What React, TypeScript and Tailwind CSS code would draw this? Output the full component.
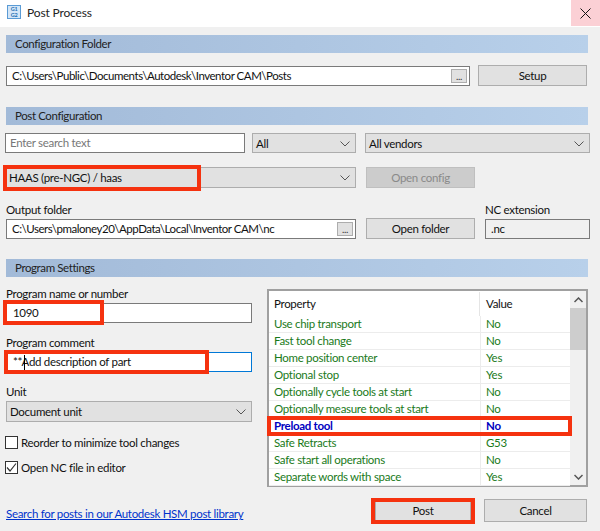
const font = { fontFamily: 'Lato, "Noto Sans", sans-serif' };

function Bar({ children }: { children: string }) {
  return (
    <div className="h-[18px] w-[582px] ml-[6px] pl-[9px] flex items-center text-[11.5px] tracking-[-0.4px] text-[#222] bg-gradient-to-r from-[#a2bad8] to-[#b8d0ea]">
      {children}
    </div>
  );
}

function Chevron() {
  return (
    <svg width="10" height="6" viewBox="0 0 10 6" className="shrink-0">
      <path d="M0.5 0.5 L5 5 L9.5 0.5" fill="none" stroke="#555" strokeWidth="1" />
    </svg>
  );
}

function Select({ label, className }: { label: string; className: string }) {
  return (
    <div className={`flex items-center justify-between border border-[#adadad] bg-[#e1e1e1] pl-[3px] pr-[5px] text-[#111] ${className}`}>
      <span>{label}</span>
      <Chevron />
    </div>
  );
}

function Btn({ label, className }: { label: string; className: string }) {
  return (
    <div className={`flex items-center justify-center border border-[#adadad] bg-[#e1e1e1] text-[#111] ${className}`}>
      {label}
    </div>
  );
}

function PathInput({ value, className }: { value: string; className: string }) {
  return (
    <div className={`flex items-center justify-between border border-[#7a7a7a] bg-white pl-[5px] pr-[2px] text-[#111] ${className}`}>
      <span className="tracking-[-0.47px]">{value}</span>
      <div className="w-[16px] h-[14px] border border-[#adadad] bg-[#e1e1e1] flex items-center justify-center text-[10px] leading-none text-[#333]">...</div>
    </div>
  );
}

const rows: [string, string][] = [
  ["Use chip transport", "No"],
  ["Fast tool change", "No"],
  ["Home position center", "Yes"],
  ["Optional stop", "Yes"],
  ["Optionally cycle tools at start", "No"],
  ["Optionally measure tools at start", "No"],
  ["Preload tool", "No"],
  ["Safe Retracts", "G53"],
  ["Safe start all operations", "No"],
  ["Separate words with space", "Yes"],
];

function Red({ className }: { className: string }) {
  return <div className={`absolute border-[4px] border-[#f5320f] pointer-events-none ${className}`} />;
}

export default function App() {
  return (
    <div style={font} className="relative w-[600px] h-[531px] bg-[#f0f0f0] overflow-hidden text-[11.5px] tracking-[-0.3px] text-[#111]">
      <div className="h-[27px] bg-white flex items-start">
        <svg width="14" height="14" viewBox="0 0 14 14" className="ml-[7px] mt-[5px]">
          <rect x="0.5" y="0.5" width="13" height="13" fill="#d4e6f7" stroke="#5a9bd5" />
          <text x="7" y="6.2" fontSize="5.5" fontWeight="700" textAnchor="middle" fill="#1f6fb5">G1</text>
          <text x="7" y="12" fontSize="5.5" fontWeight="700" textAnchor="middle" fill="#1f6fb5">G2</text>
        </svg>
        <span className="ml-[6px] mt-[4px] text-[12px] tracking-[-0.15px] text-[#222]">Post Process</span>
        <div className="ml-auto w-[29px] h-[26px] bg-[#fbd0d5] flex items-center justify-center">
          <svg width="11" height="11" viewBox="0 0 11 11"><path d="M0.5 0.5 L10.5 10.5 M10.5 0.5 L0.5 10.5" stroke="#111" strokeWidth="1" /></svg>
        </div>
      </div>

      <div className="h-[8px]" />
      <Bar>Configuration Folder</Bar>

      <div className="flex items-center mt-[12px] h-[21px] pl-[6px]">
        <PathInput value="C:\Users\Public\Documents\Autodesk\Inventor CAM\Posts" className="w-[464px] h-[20px]" />
        <Btn label="Setup" className="ml-[8px] w-[109px] h-[21px]" />
      </div>

      <div className="h-[21px]" />
      <Bar>Post Configuration</Bar>

      <div className="flex mt-[8px] h-[20px] pl-[5px]">
        <div className="w-[240px] h-[20px] border border-[#7a7a7a] bg-white pl-[4px] flex items-center text-[#777]">Enter search text</div>
        <Select label="All" className="ml-[7px] w-[104px] h-[20px] pt-[1px]" />
        <Select label="All vendors" className="ml-[9px] w-[225px] h-[20px] pt-[1px]" />
      </div>

      <div className="flex mt-[14px] h-[21px] pl-[5px]">
        <Select label="HAAS (pre-NGC) / haas" className="w-[351px] h-[21px]" />
        <Btn label="Open config" className="ml-[10px] w-[109px] h-[21px] !bg-[#cccccc] !border-[#bfbfbf] !text-[#8a8a8a]" />
      </div>

      <div className="flex mt-[15px] pl-[6px]">
        <div className="w-[350px]">
          <div className="h-[16px] leading-[14px]">Output folder</div>
          <PathInput value="C:\Users\pmaloney20\AppData\Local\Inventor CAM\nc" className="w-[350px] h-[20px]" />
        </div>
        <Btn label="Open folder" className="ml-[10px] mt-[15px] w-[109px] h-[21px]" />
        <div className="ml-[10px]">
          <div className="h-[16px] leading-[14px]">NC extension</div>
          <div className="w-[105px] h-[20px] border border-[#7a7a7a] bg-[#f0f0f0] pl-[5px] flex items-center">.nc</div>
        </div>
      </div>

      <div className="h-[20px]" />
      <Bar>Program Settings</Bar>

      <div className="flex pl-[5px] mt-[12px]">
        <div className="w-[247px]">
          <div className="h-[14px] leading-[14px] pl-[1px] mt-[-2px]">Program name or number</div>
          <div className="h-[20px] mt-[2px] border border-[#7a7a7a] bg-white pl-[7px] flex items-center">1090</div>

          <div className="h-[16px] leading-[16px] pl-[1px] mt-[12px]">Program comment</div>
          <div className="relative h-[20px] mt-[1px] border border-[#0078d7] bg-white pl-[7px] flex items-center">
            <span>**Add description of part</span>
            <span className="absolute left-[18px] top-[2px] w-px h-[15px] bg-black" />
          </div>

          <div className="h-[16px] leading-[16px] pl-[1px] mt-[12px]">Unit</div>
          <Select label="Document unit" className="ml-[1px] mt-[1px] h-[21px]" />

          <div className="flex items-center mt-[14px] h-[13px]">
            <div className="w-[13px] h-[13px] border border-[#333] bg-white" />
            <span className="ml-[3px]">Reorder to minimize tool changes</span>
          </div>
          <div className="flex items-center mt-[12px] h-[13px]">
            <div className="w-[13px] h-[13px] border border-[#333] bg-white flex items-center justify-center">
              <svg width="11" height="11" viewBox="0 0 11 11"><path d="M1 5.5 L4 9 L10 1.5" fill="none" stroke="#333" strokeWidth="1.2" /></svg>
            </div>
            <span className="ml-[3px]">Open NC file in editor</span>
          </div>
        </div>

        <div className="ml-[15px] w-[321px] h-[198px] border-2 border-[#a0a0a0] bg-white flex">
          <div className="w-[303px]">
            <div className="flex h-[25px] items-center">
              <div className="w-[211px] pl-[5px] h-[24px] flex items-center border-r border-[#e5e5e5]">Property</div>
              <div className="pl-[6px]">Value</div>
            </div>
            {rows.map(([p, v]) => {
              const active = p === "Preload tool";
              return (
                <div key={p} className={`flex h-[17px] items-center border-b border-[#ececec] ${active ? "font-bold text-[#0000c0]" : "text-[#1a7a1a]"}`}>
                  <div className="w-[212px] pl-[5px] h-full flex items-center border-r border-[#ececec] whitespace-nowrap">{p}</div>
                  <div className="pl-[5px]">{v}</div>
                </div>
              );
            })}
          </div>
          <div className="w-[16px] flex flex-col items-center bg-[#f0f0f0]">
            <div className="h-[17px] flex items-center">
              <svg width="9" height="6" viewBox="0 0 9 6"><path d="M0.5 5 L4.5 1 L8.5 5" fill="none" stroke="#555" strokeWidth="1.5" /></svg>
            </div>
            <div className="w-full h-[42px] bg-[#cdcdcd]" />
            <div className="mt-auto h-[17px] flex items-center">
              <svg width="9" height="6" viewBox="0 0 9 6"><path d="M0.5 1 L4.5 5 L8.5 1" fill="none" stroke="#555" strokeWidth="1.5" /></svg>
            </div>
          </div>
        </div>
      </div>

      <div className="flex items-center pl-[6px] mt-[12px] h-[23px]">
        <span className="text-[#0033cc] underline w-[369px] whitespace-nowrap pt-[7px]">Search for posts in our Autodesk HSM post library</span>
        <Btn label="Post" className="w-[96px] h-[23px]" />
        <Btn label="Cancel" className="ml-[13px] w-[103px] h-[23px]" />
      </div>

      <Red className="left-[3px] top-[165px] w-[198px] h-[26px]" />
      <Red className="left-[3px] top-[300px] w-[101px] h-[25px]" />
      <Red className="left-[4px] top-[350px] w-[205px] h-[24px]" />
      <Red className="left-[267px] top-[416px] w-[305px] h-[20px]" />
      <Red className="left-[371px] top-[498px] w-[104px] h-[26px]" />
    </div>
  );
}
